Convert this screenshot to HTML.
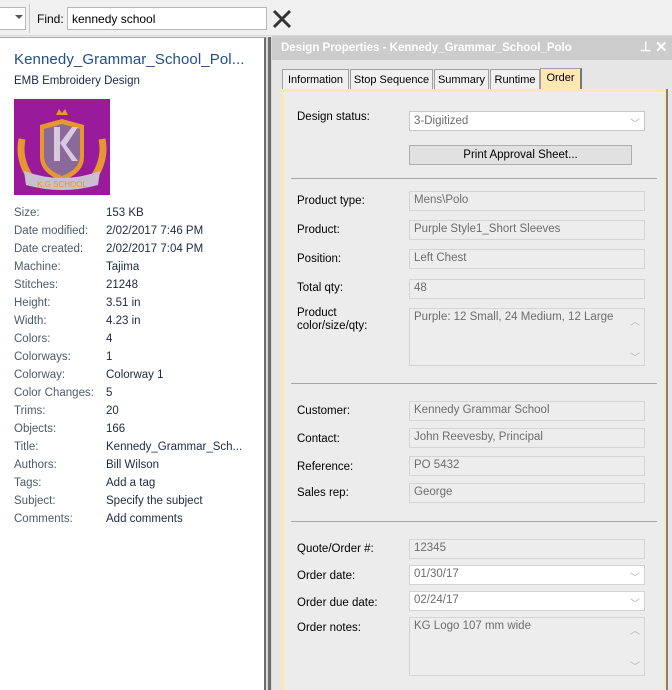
<!DOCTYPE html>
<html><head><meta charset="utf-8"><style>
*{margin:0;padding:0;box-sizing:border-box}
body{width:672px;height:690px;overflow:hidden;background:#ececec;font-family:"Liberation Sans",sans-serif;font-size:12px;position:relative;color:#000}
.a{position:absolute;white-space:nowrap}
.lbl{color:#4e5a6a}
.val{color:#1e2846}
.fld{position:absolute;left:409px;width:236px;height:20px;background:#ededed;border:1px solid #d4d4d4;color:#6d6d6d;padding:2px 4px;font-size:11.5px;white-space:nowrap}
.rl{position:absolute;left:297px;font-size:11.5px;white-space:nowrap}
.sep{position:absolute;left:291px;width:366px;height:1px;background:#a8a8a8}
.chev{position:absolute;right:4px;top:3px;color:#b0b0b0;font-size:10px}
.tab{position:absolute;top:69px;height:21px;background:#f0f0f0;border:1px solid #a0a0a0;border-bottom:none;padding:4px 0 0;font-size:11px;white-space:nowrap;text-align:center;overflow:hidden}
</style></head><body>
<div class="a" style="left:0;top:0;width:672px;height:36px;background:#f0f0f0;border-bottom:1px solid #d8d8d8"></div>
<div class="a" style="left:0;top:7px;width:26px;height:23px;background:#fff;border:1px solid #b8b8b8;border-left:none"></div>
<div class="a" style="left:15px;top:15px;width:0;height:0;border-left:4px solid transparent;border-right:4px solid transparent;border-top:4px solid #555"></div>
<div class="a" style="left:29px;top:4px;width:1px;height:29px;background:#c8c8c8"></div>
<div class="a" style="left:37px;top:12px;font-size:12px">Find:</div>
<div class="a" style="left:67px;top:7px;width:200px;height:23px;background:#fff;border:1px solid #b8b8b8;padding:4px 4px;font-size:12px">kennedy school</div>
<svg class="a" style="left:271px;top:8px" width="22" height="22"><path d="M3 3L19 19M19 3L3 19" stroke="#333" stroke-width="3"/></svg>
<div class="a" style="left:0;top:37px;width:266px;height:653px;background:#fff;border-right:2px solid #6d6d6d;border-top:1px solid #aaa"></div>
<div class="a" style="left:266px;top:37px;width:6px;height:653px;background:#d8d8d8"></div>
<div class="a" style="left:268px;top:37px;width:3px;height:653px;background:#6f6f6f"></div>
<div class="a" style="left:14px;top:51px;font-size:15px;color:#1f4e8c;letter-spacing:0.1px">Kennedy_Grammar_School_Pol...</div>
<div class="a" style="left:14px;top:75px;font-size:11.5px;color:#1e2846">EMB Embroidery Design</div>
<svg class="a" style="left:14px;top:99px" width="96" height="96">
<rect width="96" height="96" fill="#9a1a9c"/>
<path d="M8 40Q4 60 16 78M88 40Q92 60 80 78" stroke="#e8962e" stroke-width="7" fill="none"/>
<path d="M26 26L48 20L70 26L70 58Q70 74 48 82Q26 74 26 58Z" fill="#e8962e"/>
<path d="M30 30L48 25L66 30L66 57Q66 70 48 77Q30 70 30 57Z" fill="#8a6a98"/>
<path d="M40 28h6v34h-6zM46 44l12-16h6l-12 18 12 16h-6z" fill="#d8c8e0"/>
<path d="M42 16l3-6 3 4 3-4 3 6z" fill="#e8962e"/>
<path d="M10 72Q48 86 86 72L84 86Q48 96 12 86Z" fill="#c8c0d0"/>
<text x="48" y="88" font-size="8" fill="#e8962e" text-anchor="middle" font-family="Liberation Sans">K.G SCHOOL</text>
</svg>
<div class="a lbl" style="left:14px;top:204px;line-height:18px;font-size:11.5px">Size:<br>Date modified:<br>Date created:<br>Machine:<br>Stitches:<br>Height:<br>Width:<br>Colors:<br>Colorways:<br>Colorway:<br>Color Changes:<br>Trims:<br>Objects:<br>Title:<br>Authors:<br>Tags:<br>Subject:<br>Comments:</div>
<div class="a val" style="left:106px;top:204px;line-height:18px;font-size:11.5px">153 KB<br>2/02/2017 7:46 PM<br>2/02/2017 7:04 PM<br>Tajima<br>21248<br>3.51 in<br>4.23 in<br>4<br>1<br>Colorway 1<br>5<br>20<br>166<br>Kennedy_Grammar_Sch...<br>Bill Wilson<br>Add a tag<br>Specify the subject<br>Add comments</div>
<div class="a" style="left:272px;top:36px;width:400px;height:24px;background:#cccccc"></div>
<div class="a" style="left:281px;top:42px;color:#fff;font-weight:bold;font-size:11.5px">Design Properties - Kennedy_Grammar_School_Polo</div>
<div class="a" style="left:640px;top:39px;color:#fff;font-weight:bold;font-size:13px">&#x22A5;</div>
<div class="a" style="left:655px;top:38px;color:#fff;font-weight:bold;font-size:15px">✕</div>
<div class="a" style="left:272px;top:60px;width:400px;height:630px;background:#e6e6e6"></div>
<div class="tab" style="left:282px;width:67px">Information</div>
<div class="tab" style="left:350px;width:83px">Stop Sequence</div>
<div class="tab" style="left:434px;width:55px">Summary</div>
<div class="tab" style="left:490px;width:50px">Runtime</div>
<div class="tab" style="left:540px;top:68px;height:23px;width:42px;background:#fde8b4;border-right:2px solid #777;padding-top:3px">Order</div>
<div class="a" style="left:281px;top:89px;width:386px;height:601px;background:#ececec;border:3px solid #fde8b4;border-bottom:none"></div>
<div class="a" style="left:666px;top:89px;width:2px;height:601px;background:#808080"></div>

<div class="rl" style="top:111px">Design status:</div>
<div class="fld" style="top:111px;background:#fff;border-color:#c8c8c8;padding-top:3px">3-Digitized<span class="chev">﹀</span></div>
<div class="a" style="left:409px;top:145px;width:223px;height:20px;background:#e1e1e1;border:1px solid #adadad;text-align:center;padding-top:3px;font-size:11.5px">Print Approval Sheet...</div>
<div class="sep" style="top:178px"></div>

<div class="rl" style="top:195px">Product type:</div><div class="fld" style="top:191px">Mens\Polo</div>
<div class="rl" style="top:224px">Product:</div><div class="fld" style="top:220px">Purple Style1_Short Sleeves</div>
<div class="rl" style="top:253px">Position:</div><div class="fld" style="top:249px">Left Chest</div>
<div class="rl" style="top:282px">Total qty:</div><div class="fld" style="top:279px">48</div>
<div class="rl" style="top:307px;line-height:13px">Product<br>color/size/qty:</div>
<div class="fld" style="top:308px;height:58px">Purple: 12 Small, 24 Medium, 12 Large<span class="chev" style="top:4px">︿</span><span class="chev" style="top:40px">﹀</span></div>
<div class="sep" style="top:383px"></div>

<div class="rl" style="top:405px">Customer:</div><div class="fld" style="top:401px">Kennedy Grammar School</div>
<div class="rl" style="top:433px">Contact:</div><div class="fld" style="top:428px">John Reevesby, Principal</div>
<div class="rl" style="top:461px">Reference:</div><div class="fld" style="top:456px">PO 5432</div>
<div class="rl" style="top:487px">Sales rep:</div><div class="fld" style="top:483px">George</div>
<div class="sep" style="top:521px"></div>

<div class="rl" style="top:543px">Quote/Order #:</div><div class="fld" style="top:539px">12345</div>
<div class="rl" style="top:570px">Order date:</div><div class="fld" style="top:565px;background:#fff">01/30/17<span class="chev">﹀</span></div>
<div class="rl" style="top:597px">Order due date:</div><div class="fld" style="top:591px;background:#fff">02/24/17<span class="chev">﹀</span></div>
<div class="rl" style="top:622px">Order notes:</div>
<div class="fld" style="top:617px;height:59px">KG Logo 107 mm wide<span class="chev" style="top:4px">︿</span><span class="chev" style="top:40px">﹀</span></div>
</body></html>
